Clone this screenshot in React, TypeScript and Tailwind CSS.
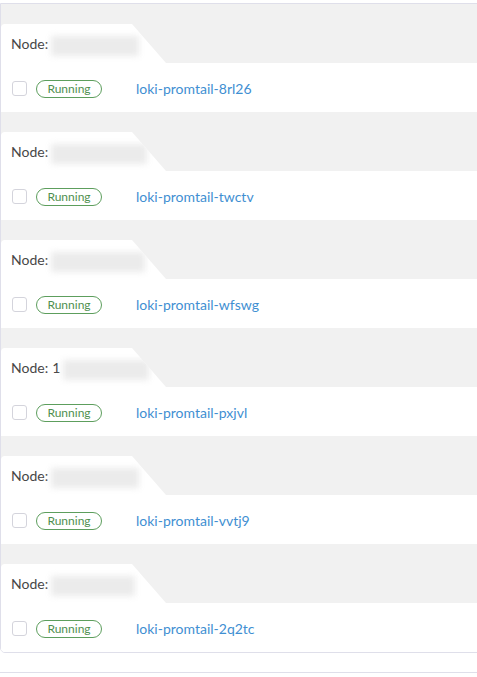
const pods = [
  { name: "loki-promtail-8rl26", mask: "w-[88px]", extra: "" },
  { name: "loki-promtail-twctv", mask: "w-[96px]", extra: "" },
  { name: "loki-promtail-wfswg", mask: "w-[94px]", extra: "" },
  { name: "loki-promtail-pxjvl", mask: "w-[86px]", extra: "1" },
  { name: "loki-promtail-vvtj9", mask: "w-[88px]", extra: "" },
  { name: "loki-promtail-2q2tc", mask: "w-[84px]", extra: "" },
];

function NodeGroup({ name, mask, extra }: { name: string; mask: string; extra: string }) {
  return (
    <div>
      <div className="h-[59px] bg-[#f1f1f1] pt-[20px]">
        <div className="flex h-[39px] w-[165px] items-center rounded-tl-[4px] bg-white pl-[10px] [clip-path:polygon(0_0,131px_0,165px_100%,0_100%)]">
          <span className="text-[14px] text-[#474747]">Node:</span>
          {extra && <span className="ml-1 text-[14px] text-[#474747]">{extra}</span>}
          <span className={`ml-[3px] mt-[4px] h-[20px] ${mask} bg-[#ebebeb] blur-[3px]`} />
        </div>
      </div>
      <div className="flex h-[49px] items-center bg-white pl-[11px] pt-[2px]">
        <span className="h-[15px] w-[15px] rounded-[3px] border border-[#d4d4dc] bg-white" />
        <span className="ml-[9px] flex h-[18px] w-[66px] items-center justify-center rounded-full border border-[#5d9e5d] pt-[1px] text-[12px] leading-none text-[#4f8f4f]">
          Running
        </span>
        <a href="#" className="ml-[34px] text-[14px] text-[#3f8fd2]">
          {name}
        </a>
      </div>
    </div>
  );
}

export default function App() {
  return (
    <div className="h-[677px] w-[477px] overflow-hidden bg-white font-['Lato',sans-serif]">
      <div className="mt-[3px] w-[490px] overflow-hidden rounded-b-[5px] border border-[#dfdfea]">
        {pods.map((p) => (
          <NodeGroup key={p.name} {...p} />
        ))}
      </div>
      <div className="mt-[19px] border-t border-[#dfdfea]" />
    </div>
  );
}
